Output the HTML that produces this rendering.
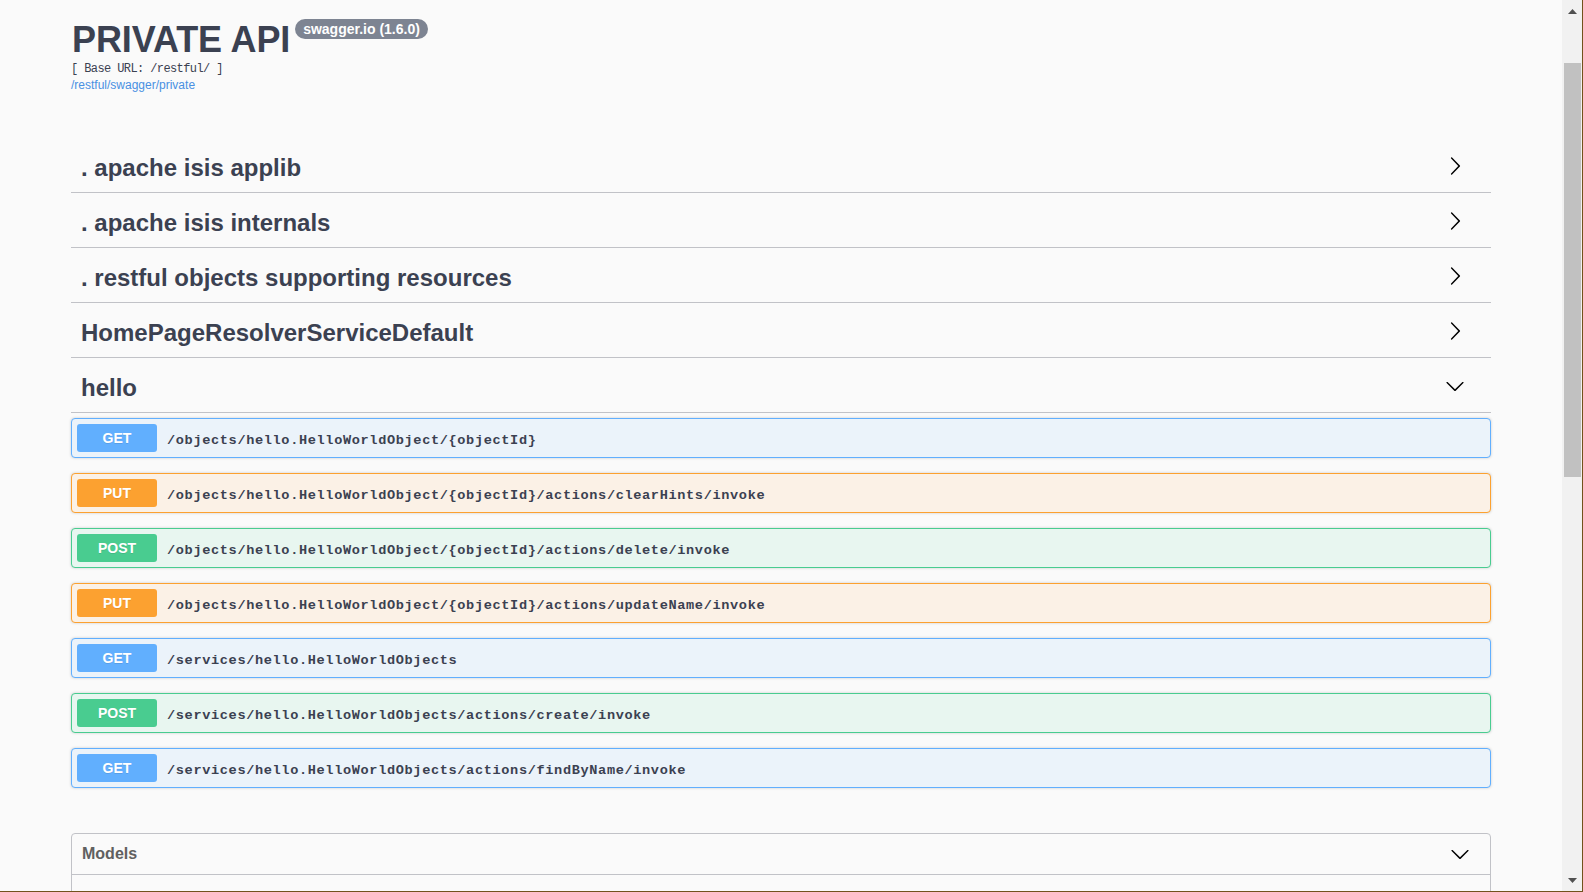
<!DOCTYPE html>
<html><head><meta charset="utf-8">
<style>
html,body{margin:0;padding:0;width:1583px;height:892px;overflow:hidden;background:#fafafa;}
body{position:relative;font-family:"Liberation Sans",sans-serif;color:#3b4151;}
.abs{position:absolute;}
#title{left:72px;top:16px;font-size:36px;letter-spacing:-0.1px;font-weight:bold;line-height:48px;white-space:nowrap;margin:0;}
#badge{left:295px;top:19px;width:133px;height:20px;border-radius:10px;background:#7d8492;color:#fff;font-size:14px;font-weight:bold;line-height:20px;text-align:center;white-space:nowrap;}
#base{left:71px;top:61px;font-family:"Liberation Mono",monospace;font-size:12px;letter-spacing:-0.6px;line-height:16px;white-space:pre;color:#3b4151;}
#link{left:71px;top:77px;font-size:12px;line-height:16px;color:#4990e2;white-space:nowrap;}
.tag{position:absolute;left:71px;width:1420px;height:49px;border-bottom:1px solid #c1c2c7;}
.tag .t{position:absolute;left:10px;top:10px;font-size:24px;font-weight:bold;line-height:29px;white-space:nowrap;}
.tag svg{position:absolute;left:1374px;width:20px;height:20px;}
.op{position:absolute;left:71px;width:1418px;height:38px;border:1px solid;border-radius:4px;box-shadow:0 0 3px rgba(0,0,0,.19);}
.op .m{position:absolute;left:5px;top:5px;width:80px;height:28px;border-radius:3px;color:#fff;font-size:14px;font-weight:bold;line-height:28px;text-align:center;text-shadow:0 1px 0 rgba(0,0,0,.1);}
.op .p{position:absolute;left:95px;top:3px;height:38px;line-height:38px;font-family:"Liberation Mono",monospace;font-size:13.6px;letter-spacing:0.64px;font-weight:bold;white-space:nowrap;color:#3b4151;}
.get{border-color:#61affe;background:#ebf3fa;}
.get .m{background:#61affe;}
.put{border-color:#fca130;background:#fbf1e6;}
.put .m{background:#fca130;}
.post{border-color:#49cc90;background:#e8f6f0;}
.post .m{background:#49cc90;}
#models{left:71px;top:833px;width:1418px;height:80px;border:1px solid #c1c2c7;border-radius:4px;}
#models .h{position:absolute;left:0;top:0;width:1418px;height:40px;border-bottom:1px solid #c1c2c7;}
#models .h span{position:absolute;left:10px;top:10px;font-size:16px;font-weight:bold;line-height:20px;color:#606060;}
#models svg{position:absolute;left:1378px;top:10px;width:20px;height:20px;}
#sb{left:1562px;top:0;width:20px;height:891px;background:#f1f1f1;}
#thumb{left:1564px;top:63px;width:17px;height:414px;background:#c1c1c1;}
#br{left:1582px;top:0;width:1px;height:892px;background:#71521c;}
#bb{left:0;top:891px;width:1583px;height:1px;background:#71521c;}
</style></head><body>
<h2 id="title" class="abs">PRIVATE API</h2>
<div id="badge" class="abs">swagger.io (1.6.0)</div>
<div id="base" class="abs">[ Base URL: /restful/ ]</div>
<div id="link" class="abs">/restful/swagger/private</div>

<div class="tag" style="top:143px"><span class="t">. apache isis applib</span><svg viewBox="0 0 20 20" style="top:13px"><path d="M13.25 10L6.109 2.58a.697.697 0 0 1 0-.979.68.68 0 0 1 .969 0l7.83 7.908a.697.697 0 0 1 0 .979l-7.83 7.908a.68.68 0 0 1-.969 0 .697.697 0 0 1 0-.979L13.25 10z"/></svg></div>
<div class="tag" style="top:198px"><span class="t">. apache isis internals</span><svg viewBox="0 0 20 20" style="top:13px"><path d="M13.25 10L6.109 2.58a.697.697 0 0 1 0-.979.68.68 0 0 1 .969 0l7.83 7.908a.697.697 0 0 1 0 .979l-7.83 7.908a.68.68 0 0 1-.969 0 .697.697 0 0 1 0-.979L13.25 10z"/></svg></div>
<div class="tag" style="top:253px"><span class="t">. restful objects supporting resources</span><svg viewBox="0 0 20 20" style="top:13px"><path d="M13.25 10L6.109 2.58a.697.697 0 0 1 0-.979.68.68 0 0 1 .969 0l7.83 7.908a.697.697 0 0 1 0 .979l-7.83 7.908a.68.68 0 0 1-.969 0 .697.697 0 0 1 0-.979L13.25 10z"/></svg></div>
<div class="tag" style="top:308px"><span class="t">HomePageResolverServiceDefault</span><svg viewBox="0 0 20 20" style="top:13px"><path d="M13.25 10L6.109 2.58a.697.697 0 0 1 0-.979.68.68 0 0 1 .969 0l7.83 7.908a.697.697 0 0 1 0 .979l-7.83 7.908a.68.68 0 0 1-.969 0 .697.697 0 0 1 0-.979L13.25 10z"/></svg></div>
<div class="tag" style="top:363px"><span class="t">hello</span><svg viewBox="0 0 20 20" style="top:13px"><path d="M17.418 6.109c.272-.268.709-.268.979 0s.271.701 0 .969l-7.908 7.83c-.27.268-.707.268-.979 0l-7.908-7.83c-.27-.268-.27-.701 0-.969.271-.268.709-.268.979 0L10 13.25l7.418-7.141z"/></svg></div>

<div class="op get" style="top:418px"><div class="m">GET</div><div class="p">/objects/hello.HelloWorldObject/{objectId}</div></div>
<div class="op put" style="top:473px"><div class="m">PUT</div><div class="p">/objects/hello.HelloWorldObject/{objectId}/actions/clearHints/invoke</div></div>
<div class="op post" style="top:528px"><div class="m">POST</div><div class="p">/objects/hello.HelloWorldObject/{objectId}/actions/delete/invoke</div></div>
<div class="op put" style="top:583px"><div class="m">PUT</div><div class="p">/objects/hello.HelloWorldObject/{objectId}/actions/updateName/invoke</div></div>
<div class="op get" style="top:638px"><div class="m">GET</div><div class="p">/services/hello.HelloWorldObjects</div></div>
<div class="op post" style="top:693px"><div class="m">POST</div><div class="p">/services/hello.HelloWorldObjects/actions/create/invoke</div></div>
<div class="op get" style="top:748px"><div class="m">GET</div><div class="p">/services/hello.HelloWorldObjects/actions/findByName/invoke</div></div>

<div id="models" class="abs"><div class="h"><span>Models</span><svg viewBox="0 0 20 20"><path d="M17.418 6.109c.272-.268.709-.268.979 0s.271.701 0 .969l-7.908 7.83c-.27.268-.707.268-.979 0l-7.908-7.83c-.27-.268-.27-.701 0-.969.271-.268.709-.268.979 0L10 13.25l7.418-7.141z"/></svg></div></div>

<div id="sb" class="abs"></div>
<div id="thumb" class="abs"></div>
<svg class="abs" style="left:1562px;top:0" width="20" height="20"><path d="M6 14 L10.5 9 L15 14 Z" fill="#505050"/></svg>
<svg class="abs" style="left:1562px;top:871px" width="20" height="20"><path d="M6 7 L15 7 L10.5 12 Z" fill="#505050"/></svg>
<div id="br" class="abs"></div>
<div id="bb" class="abs"></div>
</body></html>
